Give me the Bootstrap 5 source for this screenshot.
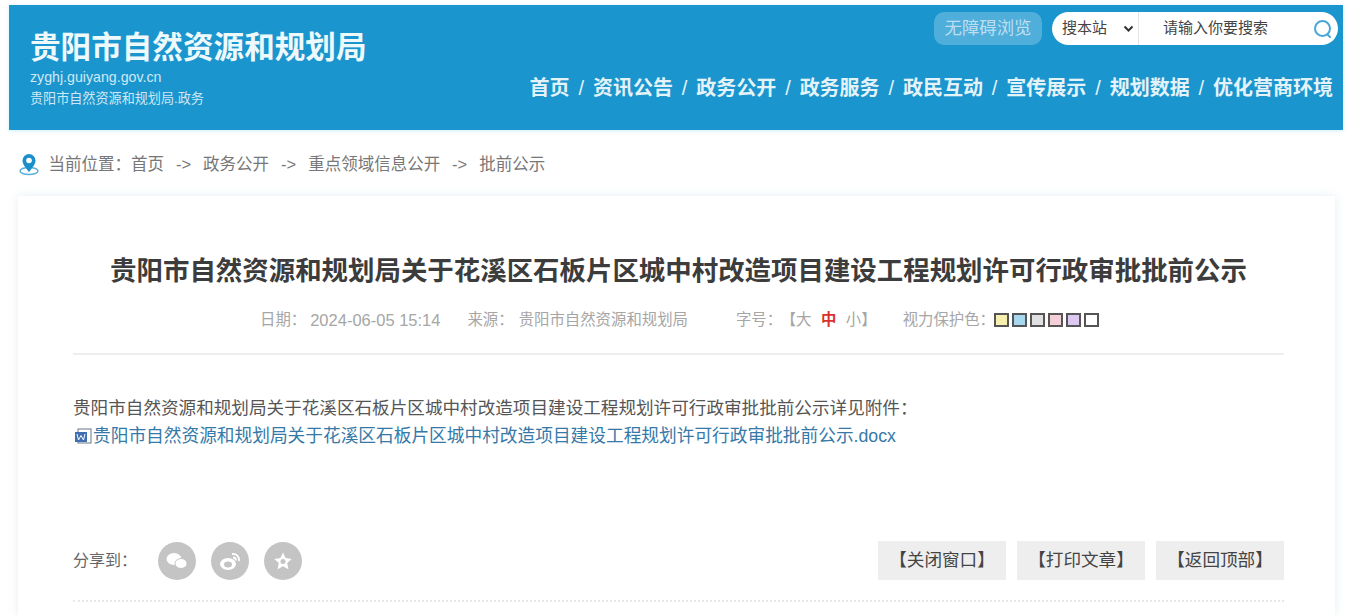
<!DOCTYPE html>
<html lang="zh-CN">
<head>
    <meta charset="UTF-8">
    <meta name="viewport" content="width=device-width, initial-scale=1">
    <title>贵阳市自然资源和规划局</title>
    <link href="https://cdn.jsdelivr.net/npm/bootstrap@5.3.0/dist/css/bootstrap.min.css" rel="stylesheet">
    <script src="https://cdn.jsdelivr.net/npm/bootstrap@5.3.0/dist/js/bootstrap.bundle.min.js"></script>

    <style>
        html, body {
            height: 616px;
            overflow: hidden;
        }

        body {
            font-family: "Liberation Sans", "Noto Sans CJK SC", sans-serif;
            background: #fff;
            color: #555;
            padding: 5px 9px 0;
        }

        .site-head {
            height: 125px;
            background: #1b95ce;
            color: #fff;
            padding: 0 10px 0 21px;
            box-shadow: 0 1px 4px rgba(120, 210, 240, .35);
        }

        .site-name {
            font-size: 30.6px;
            font-weight: 700;
            line-height: 36px;
            margin: 24px 0 0;
            color: #eef9fc;
        }

        .site-url {
            font-size: 14.2px;
            line-height: 16px;
            margin-top: 4px;
            color: #cfe8f4;
        }

        .site-sub {
            font-size: 13.1px;
            line-height: 16px;
            margin-top: 6px;
            color: #cfe8f4;
        }

        .search-row {
            margin-top: 7px;
        }

        .access-btn {
            height: 33px;
            width: 108px;
            border-radius: 10px;
            background: #50aedb;
            color: #bcdfef;
            font-size: 17.4px;
            border: 0;
            padding: 0;
        }

        .search-box {
            width: 286px;
            height: 33px;
            border-radius: 17px;
            background: #fff;
            margin-left: 10px;
            margin-right: -5px;
            color: #444;
            font-size: 15px;
        }

        .search-scope {
            width: 87px;
            padding-left: 10px;
            border-right: 1px solid #e6e6e6;
            height: 100%;
        }

        .search-hint {
            padding-left: 24px;
        }

        .site-nav {
            margin-top: 29px;
            font-size: 20px;
            font-weight: 700;
            line-height: 28px;
            color: #e4f3f9;
            white-space: nowrap;
        }

        .site-nav a {
            color: inherit;
            text-decoration: none;
        }

        .nav-sep {
            margin: 0 8.900px;
            font-weight: 400;
        }

        .crumb-bar {
            height: 66px;
            padding: 2px 0 0 9px;
            font-size: 16.5px;
            word-spacing: 1.4px;
            color: #777;
        }

        .crumb-bar span {
            white-space: pre;
        }

        .crumb-pin {
            margin-right: 8.500px;
        }

        .doc-panel {
            margin: 0 8px 0 9px;
            padding: 0 51px 0 55px;
            height: 420px;
            background: #fff;
            box-shadow: 0 0 10px rgba(60, 120, 160, .13);
        }

        .doc-title {
            font-size: 26.45px;
            font-weight: 700;
            line-height: 36px;
            color: #3c3c3c;
            text-align: center;
            margin: 0;
            padding-top: 57px;
            white-space: nowrap;
        }

        .doc-meta {
            margin-top: 20px;
            padding-bottom: 22px;
            padding-left: 187px;
            border-bottom: 2px solid #eee;
            font-size: 15.4px;
            line-height: 22px;
            color: #a6a6a6;
            white-space: nowrap;
        }

        .meta-date {
            font-size: 16.5px;
            margin-left: 4px;
        }

        .meta-source {
            margin-left: 5px;
        }

        .meta-from {
            margin-left: 27px;
        }

        .meta-size {
            margin-left: 48px;
        }

        .meta-big {
            margin-left: -1.500px;
        }

        .meta-now {
            color: #d9322e;
            font-weight: 700;
            margin: 0 9.500px;
        }

        .meta-tint-label {
            margin: 0 -1px 0 26px;
        }

        .tint {
            width: 15px;
            height: 14px;
            border: 2px solid #555;
            margin-right: 3px;
            display: inline-block;
        }

        .doc-body {
            margin-top: 38.5px;
            font-size: 17.6px;
            line-height: 28px;
            color: #555;
            white-space: nowrap;
        }

        .doc-body a {
            color: #3579a8;
            font-size: 17.7px;
            text-decoration: none;
        }

        .doc-tools {
            margin-top: 88.5px;
            height: 39px;
            border-bottom: 2px dotted #e8e8e8;
            padding-bottom: 20px;
            box-sizing: content-box;
        }

        .share-round {
            width: 38px;
            height: 38px;
            border-radius: 50%;
            background: #c4c4c4;
            margin-right: 15px;
        }

        .share-label {
            font-size: 16px;
            color: #666;
            width: 85px;
        }

        .tool-btn {
            width: 128px;
            height: 39px;
            background: #eee;
            color: #444;
            font-size: 17.6px;
            border: 0;
            border-radius: 0;
            padding: 0;
            margin-left: 11px;
        }
    </style>
</head>
<body>

<header class="site-head d-flex justify-content-between">
    <div>
        <h1 class="site-name">贵阳市自然资源和规划局</h1>
        <div class="site-url">zyghj.guiyang.gov.cn</div>
        <div class="site-sub">贵阳市自然资源和规划局.政务</div>
    </div>
    <div class="d-flex flex-column align-items-end">
        <div class="search-row d-flex align-items-center">
            <button type="button" class="btn access-btn">无障碍浏览</button>
            <div class="search-box d-flex align-items-center">
                <div class="search-scope d-flex align-items-center">
                    搜本站
                    <svg class="ms-3" width="11" height="8" viewBox="0 0 11 8"><path d="M1.5 1.5 5.5 5.5 9.5 1.5" fill="none" stroke="#333" stroke-width="2"/></svg>
                </div>
                <div class="search-hint flex-grow-1">请输入你要搜索</div>
                <svg class="me-1" width="22" height="22" viewBox="0 0 22 22"><circle cx="10.5" cy="10.5" r="7.5" fill="none" stroke="#4aa6d6" stroke-width="2"/><path d="M15.5 16.5 18 19" stroke="#4aa6d6" stroke-width="2" stroke-linecap="round"/></svg>
            </div>
        </div>
        <nav class="site-nav">
            <a href="#">首页</a><span class="nav-sep">/</span><a href="#">资讯公告</a><span class="nav-sep">/</span><a href="#">政务公开</a><span class="nav-sep">/</span><a href="#">政务服务</a><span class="nav-sep">/</span><a href="#">政民互动</a><span class="nav-sep">/</span><a href="#">宣传展示</a><span class="nav-sep">/</span><a href="#">规划数据</a><span class="nav-sep">/</span><a href="#">优化营商环境</a>
        </nav>
    </div>
</header>

<div class="crumb-bar d-flex align-items-center">
    <svg class="crumb-pin" width="22" height="24" viewBox="0 0 22 24">
        <ellipse cx="11" cy="19" rx="9" ry="3.5" fill="none" stroke="#5aaedc" stroke-width="1.5"/>
        <path d="M11 20C7 15 4.500 12 4.500 8.500a6.500 6.500 0 0 1 13 0C17.500 12 15 15 11 20z" fill="#1b8fc9"/>
        <circle cx="11" cy="8.500" r="2.800" fill="#fff"/>
    </svg>
    <span>当前位置：首页  -&gt;  政务公开  -&gt;  重点领域信息公开  -&gt;  批前公示</span>
</div>

<main class="doc-panel">
    <h2 class="doc-title">贵阳市自然资源和规划局关于花溪区石板片区城中村改造项目建设工程规划许可行政审批批前公示</h2>
    <div class="doc-meta d-flex align-items-center">
        <span>日期：</span><span class="meta-date">2024-06-05 15:14</span>
        <span class="meta-from">来源：</span><span class="meta-source">贵阳市自然资源和规划局</span>
        <span class="meta-size">字号：</span><span class="meta-big">【大</span><span class="meta-now">中</span><span>小】</span>
        <span class="meta-tint-label">视力保护色：</span>
        <i class="tint" style="background:#f8f0b0"></i>
        <i class="tint" style="background:#a8d8f0"></i>
        <i class="tint" style="background:#e0e0e0"></i>
        <i class="tint" style="background:#f5cfd8"></i>
        <i class="tint" style="background:#dcc8f0"></i>
        <i class="tint" style="background:#fff"></i>
    </div>
    <div class="doc-body">
        <div>贵阳市自然资源和规划局关于花溪区石板片区城中村改造项目建设工程规划许可行政审批批前公示详见附件：</div>
        <a href="#" class="d-inline-flex align-items-center">
            <svg width="20" height="18" viewBox="0 0 20 18">
                <rect x="5" y="2" width="13" height="14" fill="#fff" stroke="#667788"/>
                <rect x="2" y="5" width="12" height="10" fill="#3f6fb0"/>
                <path d="M4 7 5.500 13 8 8.500 10.500 13 12 7" fill="none" stroke="#fff" stroke-width="1"/>
            </svg>贵阳市自然资源和规划局关于花溪区石板片区城中村改造项目建设工程规划许可行政审批批前公示.docx
        </a>
    </div>
    <div class="doc-tools d-flex align-items-center">
        <span class="share-label">分享到：</span>
        <span class="share-round d-flex align-items-center justify-content-center">
            <svg width="24" height="20" viewBox="0 0 24 20" fill="#fff"><ellipse cx="9" cy="8" rx="7.500" ry="6"/><ellipse cx="16" cy="12.500" rx="6" ry="5" stroke="#c4c4c4"/></svg>
        </span>
        <span class="share-round d-flex align-items-center justify-content-center">
            <svg width="24" height="20" viewBox="0 0 24 20"><ellipse cx="10" cy="13" rx="8" ry="6" fill="#fff"/><ellipse cx="10" cy="13.500" rx="4" ry="3" fill="#c4c4c4"/><path d="M14 3a6 6 0 0 1 7 7M15 6.500a3 3 0 0 1 3 3" fill="none" stroke="#fff" stroke-width="1.800"/></svg>
        </span>
        <span class="share-round d-flex align-items-center justify-content-center">
            <svg width="22" height="22" viewBox="0 0 22 22"><path d="M11 2.500l2.600 5.600 6.100.8-4.500 4.200 1.200 6.100L11 16.200l-5.400 3 1.200-6.100L2.300 8.900l6.100-.8z" fill="#fff"/><circle cx="11" cy="11.500" r="2.500" fill="#c4c4c4"/></svg>
        </span>
        <div class="ms-auto d-flex">
            <button type="button" class="btn tool-btn">【关闭窗口】</button>
            <button type="button" class="btn tool-btn">【打印文章】</button>
            <button type="button" class="btn tool-btn">【返回顶部】</button>
        </div>
    </div>
</main>

</body>
</html>
